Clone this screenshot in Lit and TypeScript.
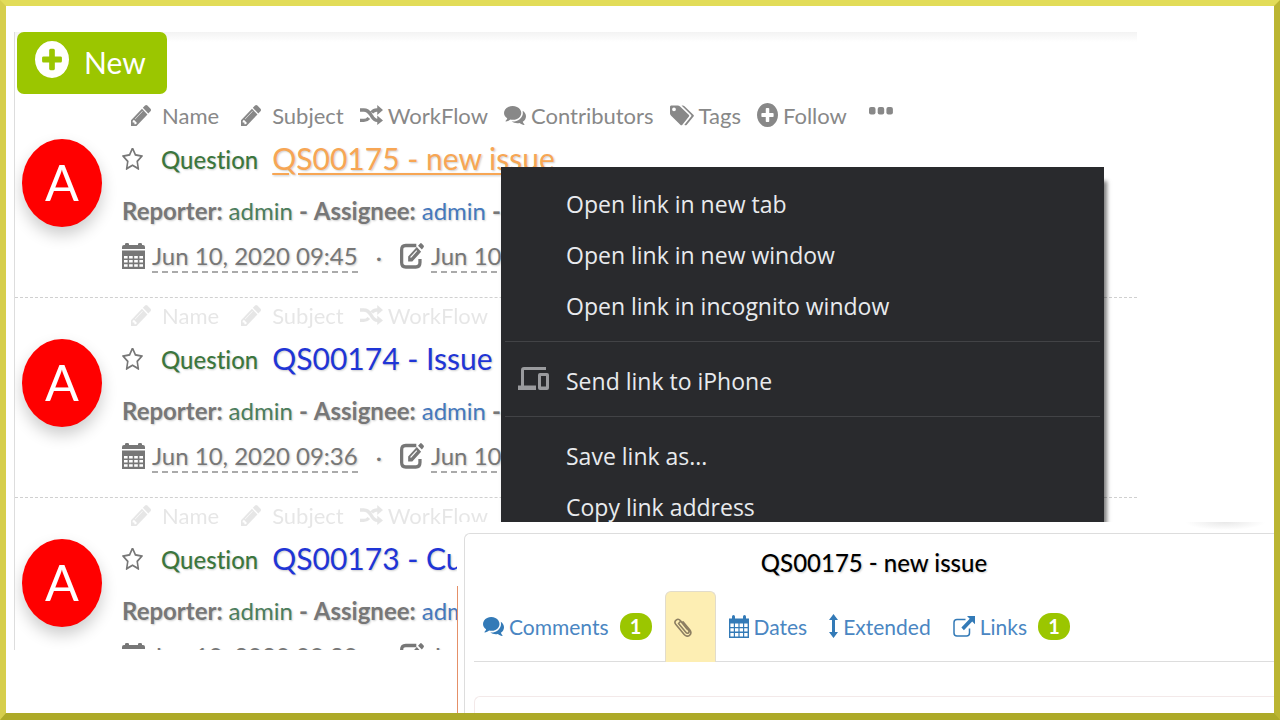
import { LitElement, html, svg, css, nothing } from "lit";
import { customElement, property } from "lit/decorators.js";

const glyphs: Record<string, { box: string; art: unknown }> = {
  plus: {
    box: "128 128 1536 1536",
    art: svg`<path d="M1344 960v-128q0-26-19-45t-45-19h-256v-256q0-26-19-45t-45-19h-128q-26 0-45 19t-19 45v256h-256q-26 0-45 19t-19 45v128q0 26 19 45t45 19h256v256q0 26 19 45t45 19h128q26 0 45-19t19-45v-256h256q26 0 45-19t19-45zm320-64q0 209-103 385.5t-279.5 279.5-385.5 103-385.5-103-279.5-279.5-103-385.5 103-385.5 279.5-279.5 385.5-103 385.5 103 279.5 279.5 103 385.5z"/>`,
  },
  pencil: {
    box: "0 149 1515 1515",
    art: svg`<path d="M363 1536l91-91-235-235-91 91v107h128v128h107zm523-928q0-22-22-22-10 0-17 7l-542 542q-7 7-7 17 0 22 22 22 10 0 17-7l542-542q7-7 7-17zm-54-192l416 416-832 832h-416v-416zm683 96q0 53-37 90l-166 166-416-416 166-165q36-38 90-38 53 0 91 38l235 234q37 39 37 91z"/>`,
  },
  star: {
    box: "64 107 1664 1587",
    art: svg`<path d="M1201 1004l306-297-422-62-189-382-189 382-422 62 306 297-73 421 378-199 377 199zm527-357q0 22-26 48l-363 354 86 500q1 7 1 20 0 50-41 50-19 0-40-12l-449-236-449 236q-22 12-40 12-21 0-31.5-14.5t-10.5-35.5q0-6 2-20l86-500-364-354q-25-27-25-48 0-37 56-46l502-73 225-455q19-41 49-41t49 41l225 455 502 73q56 9 56 46z"/>`,
  },
  comments: {
    box: "0 256 1792 1408",
    art: svg`<path d="M1408 768q0 139-94 257t-256.5 186.5-353.5 68.5q-86 0-176-16-124 88-278 128-36 9-86 16h-3q-11 0-20.5-8t-11.5-21q-1-3-1-6.5t.5-6.5 2-6l2.5-5 3.500-5.500 4-5 4.500-5 4-4.500q5-6 23-25t26-29.500 22.500-29 25-38.500 20.500-44q-124-72-195-177t-71-224q0-139 94-257t256.500-186.500 353.500-68.500 353.500 68.500 256.500 186.500 94 257zm384 256q0 120-71 224.500t-195 176.500q10 24 20.500 44t25 38.500 22.500 29 26 29.500 23 25q1 1 4 4.500t4.500 5 4 5 3.500 5.500l2.500 5 2 6 .5 6.500-1 6.500q-3 14-13 22t-22 7q-50-7-86-16-154-40-278-128-90 16-176 16-271 0-472-132 58 4 88 4 161 0 309-45t264-129q125-92 192-212t67-254q0-77-23-152 129 71 204 178t75 230z"/>`,
  },
  shuffle: {
    box: "0 0 24 22",
    art: svg`<path d="M0 5.500h4c4.500 0 6 3 7.500 5.500s3 6 6.500 6h1.500M0 17h4c2.600 0 4-1.200 5.300-2.800M12.300 8.300c1.300-1.700 2.800-2.800 5.200-2.800h2" fill="none" stroke="currentColor" stroke-width="3.600"/><path d="M18 0l6 5.500-6 5.500zM18 11.500l6 5.500-6 5z"/>`,
  },
  tags: {
    box: "0 0 24 22",
    art: svg`<path fill-rule="evenodd" d="M0 2c0-.9.600-1.500 1.500-1.500h6.200c.9 0 1.700.4 2.400 1l8.600 8.700c.7.700.7 1.500 0 2.200l-6.300 8.200c-.7.700-1.400.7-2.100 0l-8.900-9c-.9-.9-1.400-1.800-1.400-2.800zm4 .7a1.900 1.900 0 1 0 0 3.800 1.900 1.900 0 0 0 0-3.800z"/><path d="M11.500.5h1c.9 0 1.600.4 2.300 1l8.500 8.700c.8.700.8 1.500 0 2.200l-6.500 8.300c-.8.800-1.700.7-2.400 0l6.500-8.300c.7-.7.700-1.500 0-2.200z"/>`,
  },
  dots: {
    box: "0 0 24 8",
    art: svg`<rect width="6.500" height="7.500" rx="2"/><rect x="8.700" width="6.500" height="7.500" rx="2"/><rect x="17.400" width="6.500" height="7.500" rx="2"/>`,
  },
  calendar: {
    box: "0 0 23 26",
    art: svg`<path fill-rule="evenodd" d="M0 4q0-2 2-2h1V1q0-1 1.500-1h1Q7 0 7 1v1h9V1q0-1 1.500-1h1Q20 0 20 1v1h1q2 0 2 2v2H0zM0 7.500h23V26H0zM2 13v2.500h3.600V13zm5.100 0v2.500h3.600V13zm5.100 0v2.500h3.600V13zm5.200 0v2.500H21V13zM2 17v2.500h3.600V17zm5.100 0v2.500h3.600V17zm5.100 0v2.500h3.600V17zm5.200 0v2.500H21V17zM2 21.200v2.500h3.600v-2.500zm5.100 0v2.500h3.600v-2.500zm5.100 0v2.500h3.600v-2.500zm5.200 0v2.500H21v-2.500z"/>`,
  },
  calendarOpen: {
    box: "0 0 20 23",
    art: svg`<path fill-rule="evenodd" d="M0 3.500h3V1.800Q3 0 4.500 0T6 1.800v1.700h8V1.800Q14 0 15.500 0T17 1.800v1.700h3V23H0zM1.400 8.500V12h3.400V8.500zm4.600 0V12h3.400V8.500zm4.600 0V12H14V8.500zm4.600 0V12h3.400V8.500zM1.400 13.200v3.400h3.400v-3.400zm4.600 0v3.400h3.400v-3.400zm4.600 0v3.400H14v-3.400zm4.600 0v3.400h3.400v-3.400zM1.400 17.900v3.700h3.400v-3.700zm4.600 0v3.700h3.400v-3.700zm4.600 0v3.700H14v-3.700zm4.600 0v3.700h3.400v-3.700z"/>`,
  },
  edit: {
    box: "0 0 25 26",
    art: svg`<path d="M17 2.500H6Q1.700 2.500 1.700 7v12.500Q1.700 24 6 24h10.500q4.300 0 4.300-4.500V16" fill="none" stroke="currentColor" stroke-width="3.400"/><path d="M8.500 18.500v-5L17.500 4l4.500 4.800-9.200 9.700zM18.800 2.700L21 .5q.8-.8 1.600 0l2 2q.7.800 0 1.700L22.800 6.500z"/><path d="M11 14.500l6.500-6.800" stroke="#fff" stroke-width="1.100"/>`,
  },
  clip: {
    box: "0 0 18 21",
    art: svg`<path d="M4.500 6.500l7.500 9c1.700 2 4-.2 2.500-2.200L6.300 3.500C3.700.5-.7 4 1.700 7.200l8.500 10.300c3.500 4.200 8.800-.5 5.500-4.700L9 4.800M5 6c.8-1.700 2-1.500 3-.2l5 6.200" fill="none" stroke="currentColor" stroke-width="1.600" stroke-linecap="round"/>`,
  },
  arrows: {
    box: "0 0 9 24",
    art: svg`<path d="M4.500 0L9 6H6v12h3l-4.500 6L0 18h3V6H0z"/>`,
  },
  external: {
    box: "0 0 22 21",
    art: svg`<path d="M12.500 3.500H4Q1 3.500 1 6.500V17q0 3 3 3h9.500q3 0 3-3v-4.500" fill="none" stroke="currentColor" stroke-width="1.500"/><path d="M14 0h8v8.300l-2.800-2.900-8.300 8.800-2.500-2.600 8.300-8.800z"/>`,
  },
  devices: {
    box: "0 0 31 23",
    art: svg`<path d="M28 1.500H6q-1.500 0-1.500 1.500v17" fill="none" stroke="currentColor" stroke-width="3"/><path d="M0 18.500h18V23H0z"/><path fill-rule="evenodd" d="M22 6h7q2 0 2 2v13q0 2-2 2h-7q-2 0-2-2V8q0-2 2-2zm1 3v10.500h5V9z"/>`,
  },
};

const icon = (name: string, w: number, h: number) => svg`
  <svg width=${w} height=${h} viewBox=${glyphs[name].box} preserveAspectRatio="none" fill="currentColor" aria-hidden="true">${glyphs[name].art}</svg>`;

interface Issue {
  title: string;
  created: string;
  updated: string;
  active?: boolean;
}

const issues: Issue[] = [
  { title: "QS00175 - new issue", created: "Jun 10, 2020 09:45", updated: "Jun 10,", active: true },
  { title: "QS00174 - Issue", created: "Jun 10, 2020 09:36", updated: "Jun 10," },
  { title: "QS00173 - Cu", created: "Jun 10, 2020 09:30", updated: "Jun 10," },
];

const actions: [string, string, number, number][] = [
  ["pencil", "Name", 20, 21],
  ["pencil", "Subject", 20, 21],
  ["shuffle", "WorkFlow", 23, 20],
  ["comments", "Contributors", 22, 19],
  ["tags", "Tags", 24, 21],
  ["plus", "Follow", 21, 24],
];

@customElement("issue-row")
export class IssueRow extends LitElement {
  @property({ attribute: false }) issue!: Issue;

  static styles = css`
    :host {
      display: grid;
      grid-template-columns: 80px 1fr;
      column-gap: 20px;
      padding: 0 0 19px 7px;
      border-bottom: 1px dashed #d0d0d0;
      color: #777;
      font-size: 24px;
      white-space: nowrap;
      text-shadow: 1px 1px 2px rgba(0, 0, 0, 0.2);
    }
    svg { flex: none; }
    .avatar {
      width: 80px;
      height: 88px;
      margin-top: 41px;
      border-radius: 50%;
      background: #f00;
      color: #fff;
      font-size: 50px;
      line-height: 86px;
      text-align: center;
      text-shadow: none;
      box-shadow: 0 8px 16px rgba(0, 0, 0, 0.2);
    }
    .line { display: flex; align-items: center; }
    .actions {
      height: 34px;
      gap: 16px;
      padding-left: 3px;
      color: #888;
      text-shadow: none;
      opacity: 0.2;
    }
    .actions.active { opacity: 1; }
    button {
      display: flex;
      align-items: center;
      gap: 5px;
      padding: 0;
      border: 0;
      background: none;
      color: inherit;
      font: inherit;
      font-size: 22px;
    }
    .wide { gap: 11px; padding-left: 6px; }
    .more { padding: 0 0 8px 6px; }
    .heading { height: 54px; }
    .kind { margin: 0 14px 0 18px; color: #3c763d; font-weight: 500; }
    a { color: #4579bd; text-decoration: none; }
    .title { padding-bottom: 2px; color: #1f35d6; font-size: 30px; }
    .title.active {
      color: #f7a654;
      text-decoration: underline;
      text-decoration-thickness: 2px;
      text-underline-offset: 3px;
    }
    .people { height: 48px; gap: 6px; }
    .people .reporter { color: #4c7d5c; }
    .dates { height: 44px; gap: 7px; }
    time { border-bottom: 2px dashed #aaa; line-height: 31px; }
    .dot { padding: 0 11px; }
  `;

  render() {
    const { title, created, updated, active } = this.issue;
    const mark = active ? "active" : "";
    const shown = active ? actions : actions.slice(0, 3);
    return html`
      <div class="avatar">A</div>
      <div>
        <div class="line actions ${mark}">
          ${shown.map(
            ([name, label, w, h]) => html`<button class=${name === "pencil" ? "wide" : ""}>${icon(name, w, h)}${label}</button>`
          )}
          ${active ? html`<button class="more" aria-label="More">${icon("dots", 24, 8)}</button>` : nothing}
        </div>
        <div class="line heading">
          <button aria-label="Star">${icon("star", 21, 23)}</button>
          <span class="kind">Question</span>
          <a class="title ${mark}" href="#">${title}</a>
        </div>
        <div class="line people">
          <b>Reporter:</b><a class="reporter" href="#">admin</a><b>-</b><b>Assignee:</b><a href="#">admin</a><b>-</b>
        </div>
        <div class="line dates">
          ${icon("calendar", 23, 26)}<time>${created}</time><span class="dot">·</span>${icon("edit", 24, 26)}<time>${updated}</time>
        </div>
      </div>
    `;
  }
}

@customElement("context-menu")
export class ContextMenu extends LitElement {
  static styles = css`
    :host {
      display: block;
      padding-top: 12px;
      background: #292a2d;
      color: #e8eaed;
      font-family: "Open Sans", "Noto Sans", sans-serif;
      font-size: 23px;
      box-shadow: 3px 14px 4px rgba(0, 0, 0, 0.5);
    }
    button {
      display: grid;
      grid-template-columns: 31px 1fr;
      column-gap: 17px;
      align-items: center;
      width: 100%;
      height: 51px;
      padding: 0 17px 2px;
      border: 0;
      background: none;
      color: inherit;
      font: inherit;
      text-align: left;
    }
    svg { color: #9a9b9e; }
    hr { height: 1px; margin: 9px 4px 14px; border: 0; background: #424346; }
  `;

  private item(label: string, art: unknown = nothing) {
    return html`<button role="menuitem"><span>${art}</span><span>${label}</span></button>`;
  }

  render() {
    return html`
      <div role="menu">
        ${this.item("Open link in new tab")} ${this.item("Open link in new window")}
        ${this.item("Open link in incognito window")}
        <hr />
        ${this.item("Send link to iPhone", icon("devices", 31, 23))}
        <hr />
        ${this.item("Save link as...")} ${this.item("Copy link address")}
      </div>
    `;
  }
}

@customElement("issue-detail")
export class IssueDetail extends LitElement {
  static styles = css`
    :host {
      display: flex;
      box-sizing: border-box;
      background: radial-gradient(40px 8px at 94% 0, #e8e8e8, transparent) #fff;
      padding-top: 11px;
      font-size: 21px;
    }
    .marker { width: 7px; margin-top: 53px; border-left: 1px solid #e59068; box-sizing: border-box; }
    .card {
      flex: 1;
      display: flex;
      flex-direction: column;
      min-width: 0;
      border: 1px solid #ddd;
      border-width: 1px 0 0 1px;
      border-radius: 6px 0 0 0;
      padding-left: 9px;
    }
    h1 {
      margin: 0;
      height: 57px;
      font-size: 24px;
      font-weight: 500;
      line-height: 58px;
      color: #000;
      text-align: center;
      text-shadow: 1px 1px 2px rgba(0, 0, 0, 0.2);
    }
    nav { display: flex; height: 70px; border-bottom: 1px solid #ddd; }
    a {
      display: flex;
      align-items: center;
      gap: 5px;
      padding: 0 13px 0 9px;
      color: #4a86c2;
      text-decoration: none;
    }
    svg { color: #337ab7; }
    .current {
      width: 51px;
      box-sizing: border-box;
      margin: 0 4px -1px 0;
      padding: 0 8px;
      border: 1px solid #e2dccb;
      border-bottom: 0;
      border-radius: 6px 6px 0 0;
      background: #fdeeb3;
    }
    .current svg { color: #8d7f62; }
    .badge {
      width: 32px;
      margin-left: 6px;
      border-radius: 13px;
      background: #9bc600;
      color: #fff;
      font-size: 20px;
      font-weight: 700;
      line-height: 27px;
      text-align: center;
    }
    .content {
      flex: 1;
      margin-top: 34px;
      border: 1px solid #f3e9e9;
      border-width: 1px 0 0 1px;
      border-radius: 6px 0 0 0;
    }
  `;

  render() {
    return html`
      <div class="marker"></div>
      <section class="card">
        <h1>QS00175 - new issue</h1>
        <nav>
          <a href="#">${icon("comments", 21, 19)}Comments<span class="badge">1</span></a>
          <a class="current" href="#" aria-label="Attachments">${icon("clip", 18, 21)}</a>
          <a href="#">${icon("calendarOpen", 20, 23)}Dates</a>
          <a href="#">${icon("arrows", 9, 24)}Extended</a>
          <a href="#">${icon("external", 22, 21)}Links<span class="badge">1</span></a>
        </nav>
        <div class="content"></div>
      </section>
    `;
  }
}

@customElement("app-root")
export class AppRoot extends LitElement {
  static styles = css`
    :host {
      display: flex;
      position: relative;
      box-sizing: border-box;
      height: 100vh;
      padding: 26px 137px 63px 8px;
      overflow: hidden;
      border: 6px solid;
      border-bottom-width: 7px;
      border-color: #e2dc58 #bbb532 #adaa28 #d6ce4c;
      background: #fff;
      font-family: Lato, "Open Sans", sans-serif;
      font-variant-ligatures: none;
    }
    .list {
      flex: 1;
      min-width: 0;
      overflow: hidden;
      border-left: 1px solid #ddd;
      background: linear-gradient(#f3f3f3, #fff 10px);
    }
    .toolbar { height: 66px; padding-left: 2px; }
    .new {
      display: flex;
      align-items: center;
      gap: 15px;
      height: 62px;
      padding: 0 21px 2px 18px;
      border: 0;
      border-radius: 7px;
      background: #9bc600;
      color: #fff;
      font: 30px Lato, sans-serif;
    }
    .new svg { margin-bottom: 5px; }
    context-menu { position: absolute; left: 495px; right: 170px; top: 161px; }
    issue-detail { position: absolute; left: 451px; right: 0; top: 516px; bottom: 0; }
  `;

  render() {
    return html`
      <main class="list">
        <div class="toolbar"><button class="new">${icon("plus", 34, 37)}New</button></div>
        ${issues.map((issue) => html`<issue-row .issue=${issue}></issue-row>`)}
      </main>
      <context-menu></context-menu>
      <issue-detail></issue-detail>
    `;
  }
}
